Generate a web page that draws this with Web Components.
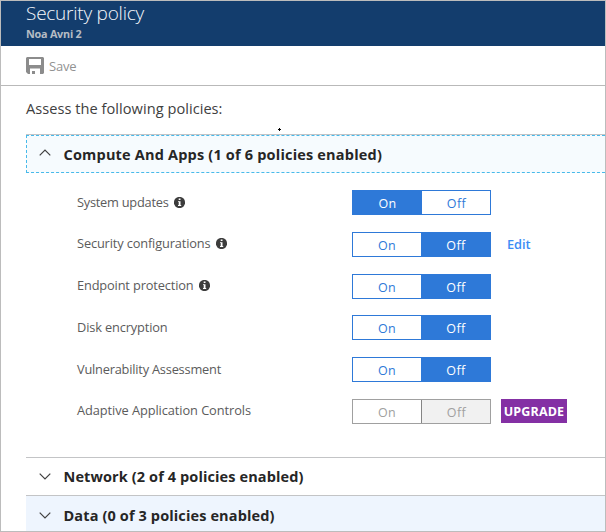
<!DOCTYPE html>
<html lang="en">
<head>
<meta charset="utf-8">
<title>Security policy</title>
<style>
body { margin: 0; font-family: "Open Sans", "Noto Sans", sans-serif; }
</style>
</head>
<body>
<policy-blade></policy-blade>
<script>
function define(name, html, setup) {
  const tpl = document.createElement('template');
  tpl.innerHTML = html;
  customElements.define(name, class extends HTMLElement {
    constructor() {
      super();
      this.attachShadow({ mode: 'open' });
    }
    connectedCallback() {
      if (this.shadowRoot.childNodes.length) return;
      this.shadowRoot.append(tpl.content.cloneNode(true));
      if (setup) setup(this, this.shadowRoot);
    }
  });
}

/* One-line label tracked so that it takes exactly the width given in "w". */
define('fit-label', `
  <style>:host{display:block;white-space:nowrap} span{display:inline-block}</style>
  <span></span>`, (el, root) => {
  const s = root.querySelector('span');
  s.textContent = el.getAttribute('text');
  const w = parseFloat(el.getAttribute('w'));
  const n = s.textContent.length;
  s.style.letterSpacing = ((w - s.getBoundingClientRect().width) / n).toFixed(3) + 'px';
});

define('blade-header', `
  <style>
    :host{display:flex;flex-direction:column;box-sizing:border-box;height:45px;padding-left:25px;background:#133d6d;color:#fff}
    .t{font-size:19px;font-weight:300;line-height:25px;color:#f4f7fb}
    .s{font-size:10.8px;font-weight:700;line-height:15px;color:#b6bcc4}
  </style>
  <fit-label class="t" w="118" text="Security policy"></fit-label>
  <fit-label class="s" w="55.5" text="Noa Avni 2"></fit-label>`);

define('tool-bar', `
  <style>
    :host{display:flex;align-items:center;gap:5px;box-sizing:border-box;height:40px;padding:0 0 0 25px;border-bottom:1px solid #b9b9b9;color:#929292;font-size:13px}
    svg{display:block;width:18px;height:17px}
  </style>
  <svg viewBox="0 0 18 17"><path fill="#8c8c8c" fill-rule="evenodd" d="M1 0H17L18 1V16L17 17H14V11.5H4V17H2L0 15V1ZM3 2V8H15V2Z"/><path fill="#8c8c8c" d="M6 14H9V17H6Z"/></svg>
  <fit-label w="27.5" text="Save"></fit-label>`);

define('info-icon', `
  <style>:host{display:block;width:11px;height:11px} svg{display:block}</style>
  <svg width="11" height="11" viewBox="0 0 11 11"><circle cx="5.5" cy="5.5" r="5.6" fill="#3c3c3c"/><path fill="#fff" d="M4.7 1.5H6.5V3.1H4.7ZM4 4.2H6.5V8H7.2V9H4V8H4.7V5H4Z"/></svg>`);

define('on-off', `
  <style>
    :host{--c:#2e79d8;display:grid;grid-template-columns:68px 69px;box-sizing:border-box;width:139px;height:25px;border:1px solid var(--c);font-size:12.5px;line-height:25px;color:var(--c)}
    div{display:flex;justify-content:center;height:23px}
    .off{box-sizing:border-box;padding-left:1px}
    :host([value="on"]) .on,:host([value="off"]) .off{background:var(--c);color:#fff}
    :host([value="on"]) .on{margin-right:-1px}
    :host([value="on"]) .off{margin-left:1px}
    :host([disabled]){--c:#a0a0a0}
    :host([disabled]) .off{background:#f1f1f1;color:#a0a0a0;border-left:1px solid #858585;margin-left:0}
  </style>
  <div class="on"><fit-label w="18" text="On"></fit-label></div>
  <div class="off"><fit-label w="19.5" text="Off"></fit-label></div>`);

define('policy-row', `
  <style>
    :host{display:grid;grid-template-columns:275px 139px 1fr;align-items:center;height:25px;color:#5b5b5b;font-size:12.8px;line-height:17px}
    .n{display:flex;align-items:center;gap:5.5px;margin-top:-1px}
  </style>
  <div class="n"><fit-label></fit-label></div><on-off></on-off><slot></slot>`, (el, root) => {
  if (el.hasAttribute('info')) root.querySelector('.n').append(document.createElement('info-icon'));
  const old = root.querySelector('fit-label');
  const lab = document.createElement('fit-label');
  lab.setAttribute('text', el.getAttribute('name'));
  lab.setAttribute('w', el.getAttribute('w'));
  old.replaceWith(lab);
  const t = root.querySelector('on-off');
  t.setAttribute('value', el.getAttribute('value'));
  if (el.hasAttribute('disabled')) t.setAttribute('disabled', '');
});

define('section-bar', `
  <style>
    :host{display:flex;align-items:center;box-sizing:border-box;height:38px;padding-left:13px;border-top:1px solid #c3c4c6;color:#262626;font-size:14.5px;font-weight:700}
    :host([open]){height:39px;padding-left:0}
    :host([tint]){height:36px;flex:1;background:#eef5fe;padding-top:4px}
    .b{display:flex;align-items:center;gap:12.5px;flex:1}
    :host([open]) .b{box-sizing:border-box;height:38px;padding-left:12px;border:1px dashed #48baea;border-right:0;background:#f6fbfe}
    svg{display:block;flex:none}
    :host([open]) svg{transform:translateY(-2px) scaleY(-1)}
  </style>
  <div class="b"><svg width="12" height="7" viewBox="0 0 12 7"><path d="M.7.7 6 6 11.3.7" fill="none" stroke="#404040" stroke-width="1.2"/></svg><slot></slot></div>`);

define('cursor-mark', `
  <style>:host{position:absolute;left:277px;top:127px;width:3px;height:3px;background:linear-gradient(#000,#000) 1px 0/1px 3px no-repeat,linear-gradient(#000,#000) 0 1px/3px 1px no-repeat}</style>`);

define('policy-blade', `
  <style>
    :host{display:flex;flex-direction:column;position:relative;box-sizing:border-box;width:606px;height:532px;border:1px solid #bcbcbc;background:#fff;overflow:hidden}
    .intro{height:48px;padding-left:25px;box-sizing:border-box;padding-top:10px;font-size:14.6px;line-height:24px;color:#404040}
    .list{display:flex;flex-direction:column;flex:1;padding-left:25px}
    .rows{display:flex;flex-direction:column;justify-content:space-between;box-sizing:border-box;height:284px;padding:17px 0 33px 51px}
    .edit{margin-left:16px;color:#3c8df5;font-size:12.8px;font-weight:600}
    .up{display:flex;align-items:center;justify-content:center;width:66px;height:24px;margin:-1px 0 0 10px;background:#8430a4;color:#fff;font-size:12.5px;line-height:16px;font-weight:700}
    .up fit-label{padding-top:2px}
  </style>
  <blade-header></blade-header>
  <tool-bar></tool-bar>
  <fit-label class="intro" w="196.5" text="Assess the following policies:"></fit-label>
  <div class="list">
    <section-bar open><fit-label w="318.5" text="Compute And Apps (1 of 6 policies enabled)"></fit-label></section-bar>
    <div class="rows">
      <policy-row name="System updates" w="91.5" info value="on"></policy-row>
      <policy-row name="Security configurations" w="133.5" info value="off"></policy-row>
      <policy-row name="Endpoint protection" w="116.5" info value="off"></policy-row>
      <policy-row name="Disk encryption" w="90.5" value="off"></policy-row>
      <policy-row name="Vulnerability Assessment" w="144" value="off"></policy-row>
      <policy-row name="Adaptive Application Controls" w="174" value="off" disabled><div class="up"><fit-label w="60.5" text="UPGRADE"></fit-label></div></policy-row>
    </div>
    <section-bar><fit-label w="240" text="Network (2 of 4 policies enabled)"></fit-label></section-bar>
    <section-bar tint><fit-label w="211" text="Data (0 of 3 policies enabled)"></fit-label></section-bar>
  </div>
  <cursor-mark></cursor-mark>`, (el, root) => {
  const edit = document.createElement('fit-label');
  edit.className = 'edit';
  edit.setAttribute('w', '23.5');
  edit.setAttribute('text', 'Edit');
  root.querySelectorAll('policy-row')[1].append(edit);
});
</script>
</body>
</html>
